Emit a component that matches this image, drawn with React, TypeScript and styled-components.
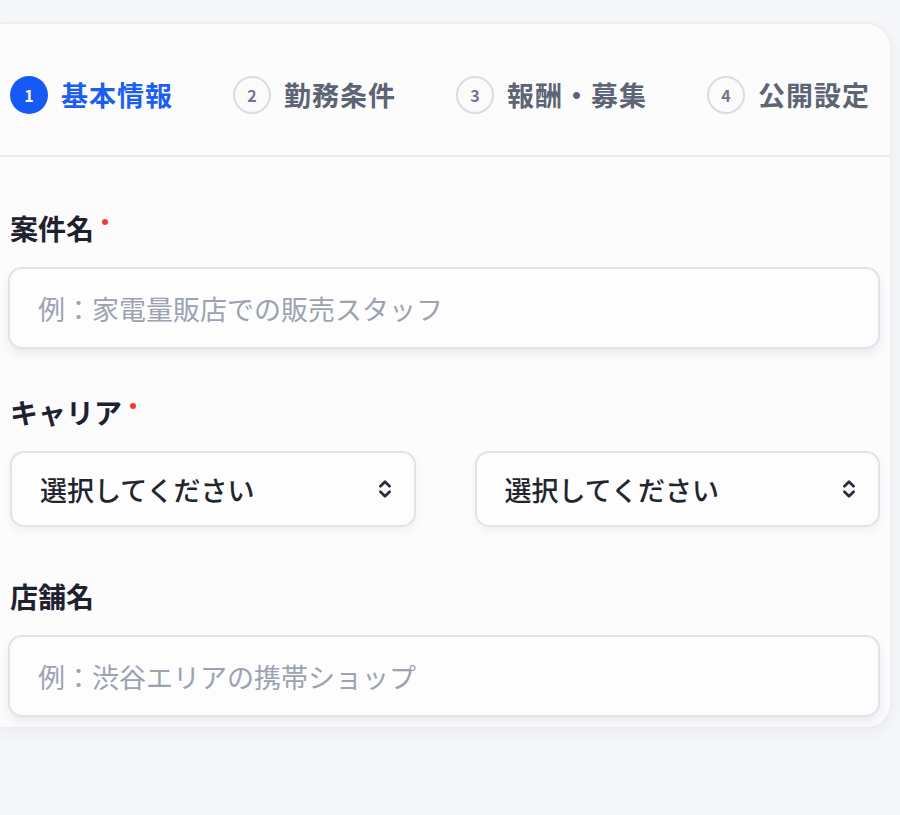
import React from "react";
import styled, { createGlobalStyle } from "styled-components";
import { ChevronsUpDown } from "lucide-react";

const GlobalStyle = createGlobalStyle`
  html, body {
    margin: 0;
    padding: 0;
    background: #f6f7f9;
    font-family: "Noto Sans CJK JP", "Noto Sans", sans-serif;
  }
`;

const Page = styled.div`
  width: 900px;
  height: 815px;
  padding-top: 22px;
  box-sizing: border-box;
`;

const Card = styled.div`
  width: 892px;
  box-sizing: border-box;
  background: #fcfcfd;
  border: 2px solid #eceef2;
  border-left: none;
  border-radius: 4px 26px 26px 4px;
  box-shadow: 0 6px 18px rgba(30, 40, 70, 0.05);
  padding-bottom: 10px;
`;

const Stepper = styled.div`
  display: flex;
  align-items: center;
  justify-content: space-between;
  padding: 51px 20px 41px 10px;
  border-bottom: 2px solid #eceef2;
`;

const Step = styled.div`
  display: flex;
  align-items: center;
  gap: 13px;
`;

const StepCircle = styled.div<{ $active?: boolean }>`
  width: 38px;
  height: 38px;
  box-sizing: border-box;
  border-radius: 50%;
  display: flex;
  align-items: center;
  justify-content: center;
  font-size: 16px;
  font-weight: 700;
  background: ${p => (p.$active ? "#1659f5" : "#fbfbfc")};
  color: ${p => (p.$active ? "#ffffff" : "#6f7585")};
  border: ${p => (p.$active ? "none" : "2px solid #d9dce3")};
`;

const StepLabel = styled.span<{ $active?: boolean }>`
  font-size: 27px;
  font-weight: 700;
  letter-spacing: 1px;
  color: ${p => (p.$active ? "#1c5ef2" : "#5d6474")};
`;

const Form = styled.div`
  padding: 54px 10px 0 8px;
  display: flex;
  flex-direction: column;
`;

const Field = styled.div<{ $gap: number }>`
  display: flex;
  flex-direction: column;
  margin-bottom: ${p => p.$gap}px;
`;

const Label = styled.div`
  display: flex;
  align-items: flex-start;
  height: 34px;
  padding-left: 2px;
  margin-bottom: 22px;
  font-size: 28px;
  font-weight: 700;
  color: #1e2230;
  line-height: 34px;
`;

const Required = styled.span`
  width: 6px;
  height: 6px;
  border-radius: 50%;
  background: #f03a3a;
  margin: 8px 0 0 8px;
`;

const TextInput = styled.input`
  height: 82px;
  box-sizing: border-box;
  width: 100%;
  border: 2px solid #e0e3ea;
  border-radius: 14px;
  background: #fdfdfe;
  box-shadow: 0 5px 10px rgba(30, 40, 70, 0.08);
  padding: 0 28px;
  font-family: inherit;
  font-size: 27px;
  color: #20242f;
  outline: none;
  &::placeholder {
    color: #9ca2b1;
  }
`;

const SelectRow = styled.div`
  display: grid;
  grid-template-columns: 1fr 1fr;
  gap: 59px;
  padding-left: 2px;
`;

const SelectBox = styled.div`
  height: 76px;
  box-sizing: border-box;
  border: 2px solid #e0e3ea;
  border-radius: 14px;
  background: #fdfdfe;
  box-shadow: 0 4px 8px rgba(30, 40, 70, 0.05);
  display: flex;
  align-items: center;
  justify-content: space-between;
  padding: 0 18px 0 28px;
  font-size: 27px;
  font-weight: 500;
  color: #22252d;
`;

const Select = () => (
  <SelectBox>
    <span>選択してください</span>
    <ChevronsUpDown size={22} strokeWidth={3} color="#2a2e38" />
  </SelectBox>
);

const steps = ["基本情報", "勤務条件", "報酬・募集", "公開設定"];

export default function App() {
  return (
    <Page>
      <GlobalStyle />
      <Card>
        <Stepper>
          {steps.map((s, i) => (
            <Step key={s}>
              <StepCircle $active={i === 0}>{i + 1}</StepCircle>
              <StepLabel $active={i === 0}>{s}</StepLabel>
            </Step>
          ))}
        </Stepper>
        <Form>
          <Field $gap={46}>
            <Label>
              案件名<Required />
            </Label>
            <TextInput placeholder="例：家電量販店での販売スタッフ" />
          </Field>
          <Field $gap={52}>
            <Label>
              キャリア<Required />
            </Label>
            <SelectRow>
              <Select />
              <Select />
            </SelectRow>
          </Field>
          <Field $gap={0}>
            <Label>店舗名</Label>
            <TextInput placeholder="例：渋谷エリアの携帯ショップ" />
          </Field>
        </Form>
      </Card>
    </Page>
  );
}
